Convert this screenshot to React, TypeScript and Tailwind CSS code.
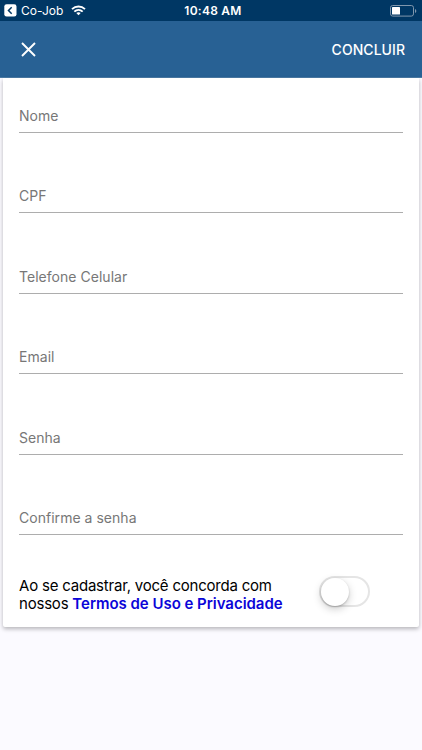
import { useState } from 'react';

const fields = [
  { label: 'Nome', type: 'text' },
  { label: 'CPF', type: 'text' },
  { label: 'Telefone Celular', type: 'tel' },
  { label: 'Email', type: 'email' },
  { label: 'Senha', type: 'password' },
  { label: 'Confirme a senha', type: 'password' },
];

function StatusBar() {
  return (
    <div className="grid h-[21px] grid-cols-3 items-center bg-[#003764] text-white">
      <div className="flex items-center pl-1">
        <svg width="13" height="13" viewBox="0 0 13 13">
          <rect x="0.3" y="0.3" width="12.2" height="12.2" rx="2.3" fill="#fff" />
          <path d="M7.7 3.3 4.5 6.5l3.2 3.2" fill="none" stroke="#003764" strokeWidth="1.5" />
        </svg>
        <span className="ml-1 text-[12px] leading-[21px]">Co-Job</span>
        <svg className="ml-2" width="15" height="11" viewBox="0 0 15 11" fill="none" stroke="#fff" strokeWidth="1.9">
          <path d="M1 4.1c3.7-3.5 9.3-3.5 13 0" />
          <path d="M3.3 6.6c2.4-2.2 6-2.2 8.4 0" />
          <path d="M7.5 10.3 5.3 8.1c1.3-1.1 3.1-1.1 4.4 0Z" fill="#fff" stroke="none" />
        </svg>
      </div>
      <span className="pl-1 text-center text-[12px] leading-[21px] font-semibold tracking-[0.25px]">10:48 AM</span>
      <div className="flex justify-end pr-[5px]">
        <svg width="27" height="12" viewBox="0 0 27 12">
          <rect x="0.5" y="0.5" width="23" height="10.6" rx="2.2" fill="none" stroke="#8097ad" />
          <rect x="2" y="2" width="8" height="7.6" rx="0.6" fill="#fff" />
          <path d="M25 4v4c1.8-.7 1.8-3.3 0-4Z" fill="#8097ad" />
        </svg>
      </div>
    </div>
  );
}

export default function App() {
  const [accepted, setAccepted] = useState(false);

  return (
    <div className="h-[750px] w-full overflow-hidden bg-[#fbfaff] font-['Inter','Liberation_Sans',sans-serif]">
      <StatusBar />

      {/* Toolbar */}
      <header className="flex h-[57px] items-center justify-between border-b border-[#4b7ba5] bg-[#286194] pr-[17px] pl-[21px] text-white">
        <button aria-label="Fechar">
          <svg width="15" height="15" viewBox="0 0 15 15" stroke="#fff" strokeWidth="1.9">
            <path d="m1 1 13 13M14 1 1 14" />
          </svg>
        </button>
        <button className="text-[14px] font-medium tracking-[0.05px]">CONCLUIR</button>
      </header>

      {/* Form */}
      <form className="mx-[3px] h-[549px] rounded-b-[2px] bg-white px-4 shadow-[0_2px_4px_rgba(0,0,0,0.28)]">
        {fields.map((field, i) => (
          <div key={field.label} className={i === 0 ? 'flex h-[55px] items-end' : 'flex h-[80.4px] items-end'}>
            <input
              type={field.type}
              placeholder={field.label}
              className="h-[34px] w-full border-b border-[#adadad] text-[14px] tracking-[0.03px] outline-none placeholder:text-[#777777]"
            />
          </div>
        ))}

        <div className="mt-[36px] flex items-center justify-between pr-[33px]">
          <p className="pt-[6px] text-[15px] leading-[18px] tracking-[-0.21px] text-black">
            Ao se cadastrar, você concorda com<br />
            nossos <a className="font-semibold tracking-[-0.03px] text-[#0b05d8]">Termos de Uso e Privacidade</a>
          </p>
          <button
            type="button"
            role="switch"
            aria-checked={accepted}
            aria-label="Aceitar termos"
            onClick={() => setAccepted(!accepted)}
            className={`flex h-[31px] w-[51px] items-center rounded-full border-2 border-[#e5e5e5] ${accepted ? 'justify-end bg-[#286194]' : 'bg-white'}`}
          >
            <span className="size-[28px] shrink-0 rounded-full bg-white shadow-[0_3px_8px_rgba(0,0,0,0.2),0_1px_2px_rgba(0,0,0,0.2)]" />
          </button>
        </div>
      </form>
    </div>
  );
}
